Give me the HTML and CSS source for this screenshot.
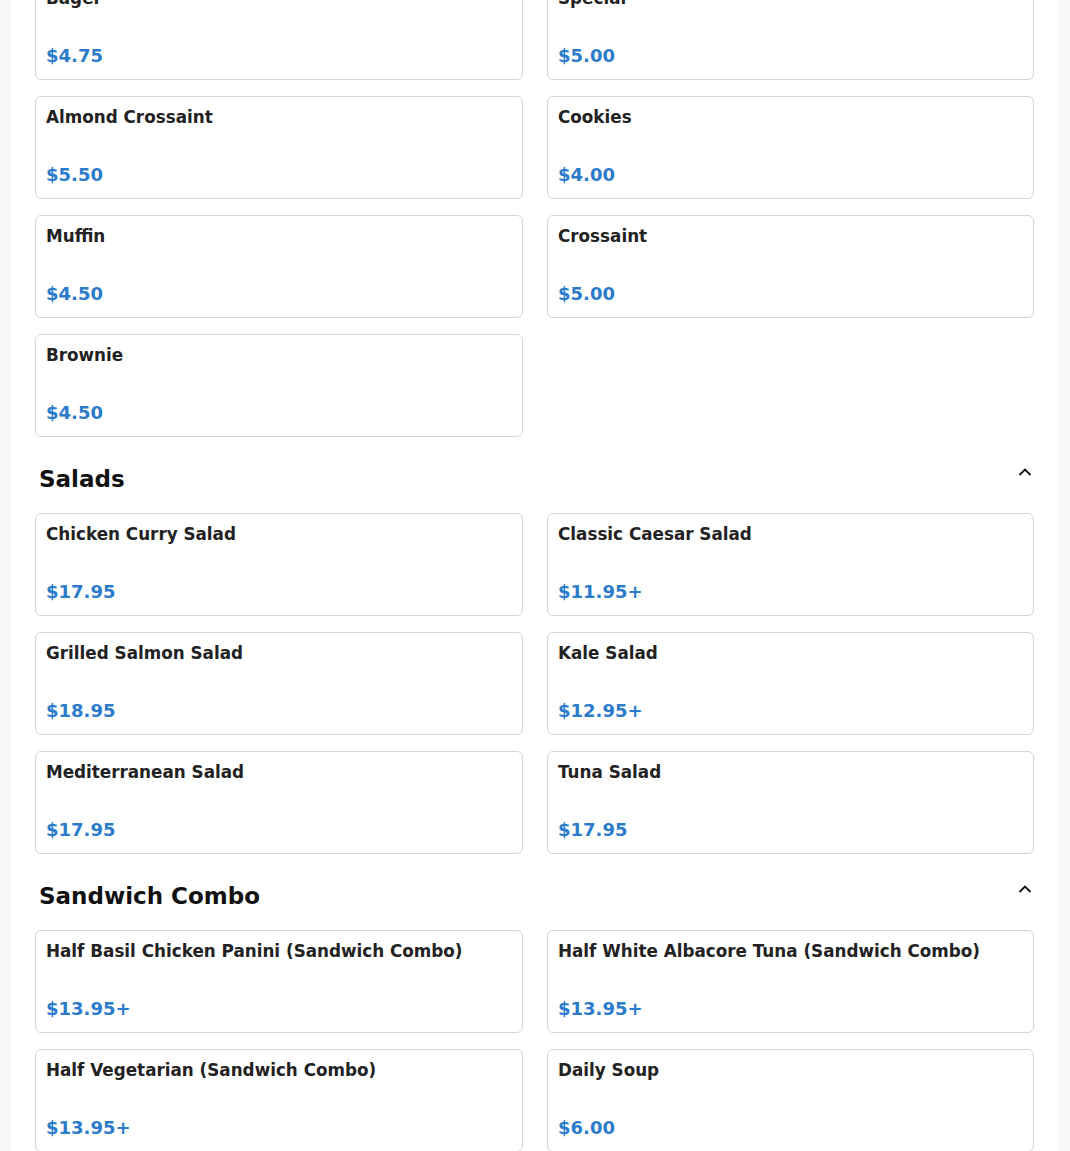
FILE: index.html
```html
<!DOCTYPE html>
<html lang="en">
<head>
<meta charset="utf-8">
<title>Menu</title>
<link rel="stylesheet" href="styles.css">
</head>
<body>
<main class="panel">
  <section class="section section-first">
    <div class="grid">
      <div class="card"><div class="name">Bagel</div><div class="price">$4.75</div></div>
      <div class="card"><div class="name">Special</div><div class="price">$5.00</div></div>
      <div class="card"><div class="name">Almond Crossaint</div><div class="price">$5.50</div></div>
      <div class="card"><div class="name">Cookies</div><div class="price">$4.00</div></div>
      <div class="card"><div class="name">Muffin</div><div class="price">$4.50</div></div>
      <div class="card"><div class="name">Crossaint</div><div class="price">$5.00</div></div>
      <div class="card"><div class="name">Brownie</div><div class="price">$4.50</div></div>
    </div>
  </section>
  <section class="section">
    <div class="section-head">
      <h2 class="section-title">Salads</h2>
      <svg class="chevron" width="14" height="10" viewBox="0 0 14 10"><path d="M1.5 8 L7 2.5 L12.5 8" fill="none" stroke="#111" stroke-width="1.8"/></svg>
    </div>
    <div class="grid">
      <div class="card"><div class="name">Chicken Curry Salad</div><div class="price">$17.95</div></div>
      <div class="card"><div class="name">Classic Caesar Salad</div><div class="price">$11.95+</div></div>
      <div class="card"><div class="name">Grilled Salmon Salad</div><div class="price">$18.95</div></div>
      <div class="card"><div class="name">Kale Salad</div><div class="price">$12.95+</div></div>
      <div class="card"><div class="name">Mediterranean Salad</div><div class="price">$17.95</div></div>
      <div class="card"><div class="name">Tuna Salad</div><div class="price">$17.95</div></div>
    </div>
  </section>
  <section class="section">
    <div class="section-head">
      <h2 class="section-title">Sandwich Combo</h2>
      <svg class="chevron" width="14" height="10" viewBox="0 0 14 10"><path d="M1.5 8 L7 2.5 L12.5 8" fill="none" stroke="#111" stroke-width="1.8"/></svg>
    </div>
    <div class="grid">
      <div class="card"><div class="name">Half Basil Chicken Panini (Sandwich Combo)</div><div class="price">$13.95+</div></div>
      <div class="card"><div class="name">Half White Albacore Tuna (Sandwich Combo)</div><div class="price">$13.95+</div></div>
      <div class="card"><div class="name">Half Vegetarian (Sandwich Combo)</div><div class="price">$13.95+</div></div>
      <div class="card"><div class="name">Daily Soup</div><div class="price">$6.00</div></div>
    </div>
  </section>
</main>
</body>
</html>
```

FILE: styles.css
```css
html, body {
  margin: 0;
  padding: 0;
  background: #f8f8f8;
  height: 1151px;
  overflow: hidden;
}
body {
  font-family: "DejaVu Sans", "Liberation Sans", sans-serif;
}
.panel {
  background: #ffffff;
  margin: 0 12px 0 11px;
  padding: 0 24px;
  min-height: 1300px;
}
.section-first {
  margin-top: -23px;
}
.section-head {
  display: flex;
  justify-content: space-between;
  align-items: center;
  padding: 27px 2px 0 4px;
  height: 30px;
}
.section-title {
  margin: 0;
  font-size: 23px;
  font-weight: bold;
  color: #111;
  line-height: 30px;
}
.chevron {
  display: block;
  margin-top: -14px;
}
.grid {
  display: grid;
  grid-template-columns: 488px 487px;
  column-gap: 24px;
  row-gap: 16px;
  padding-top: 19px;
}
.section-first .grid {
  padding-top: 0;
}
.card {
  box-sizing: border-box;
  height: 103px;
  border: 1px solid #d4d4d4;
  border-radius: 6px;
  padding: 10px 10px 12px 10px;
  display: flex;
  flex-direction: column;
  justify-content: space-between;
}
.name {
  font-size: 16.8px;
  font-weight: bold;
  color: #222;
  line-height: 20px;
}
.price {
  font-size: 18px;
  font-weight: bold;
  color: #2b7bca;
  line-height: 22px;
}
```
